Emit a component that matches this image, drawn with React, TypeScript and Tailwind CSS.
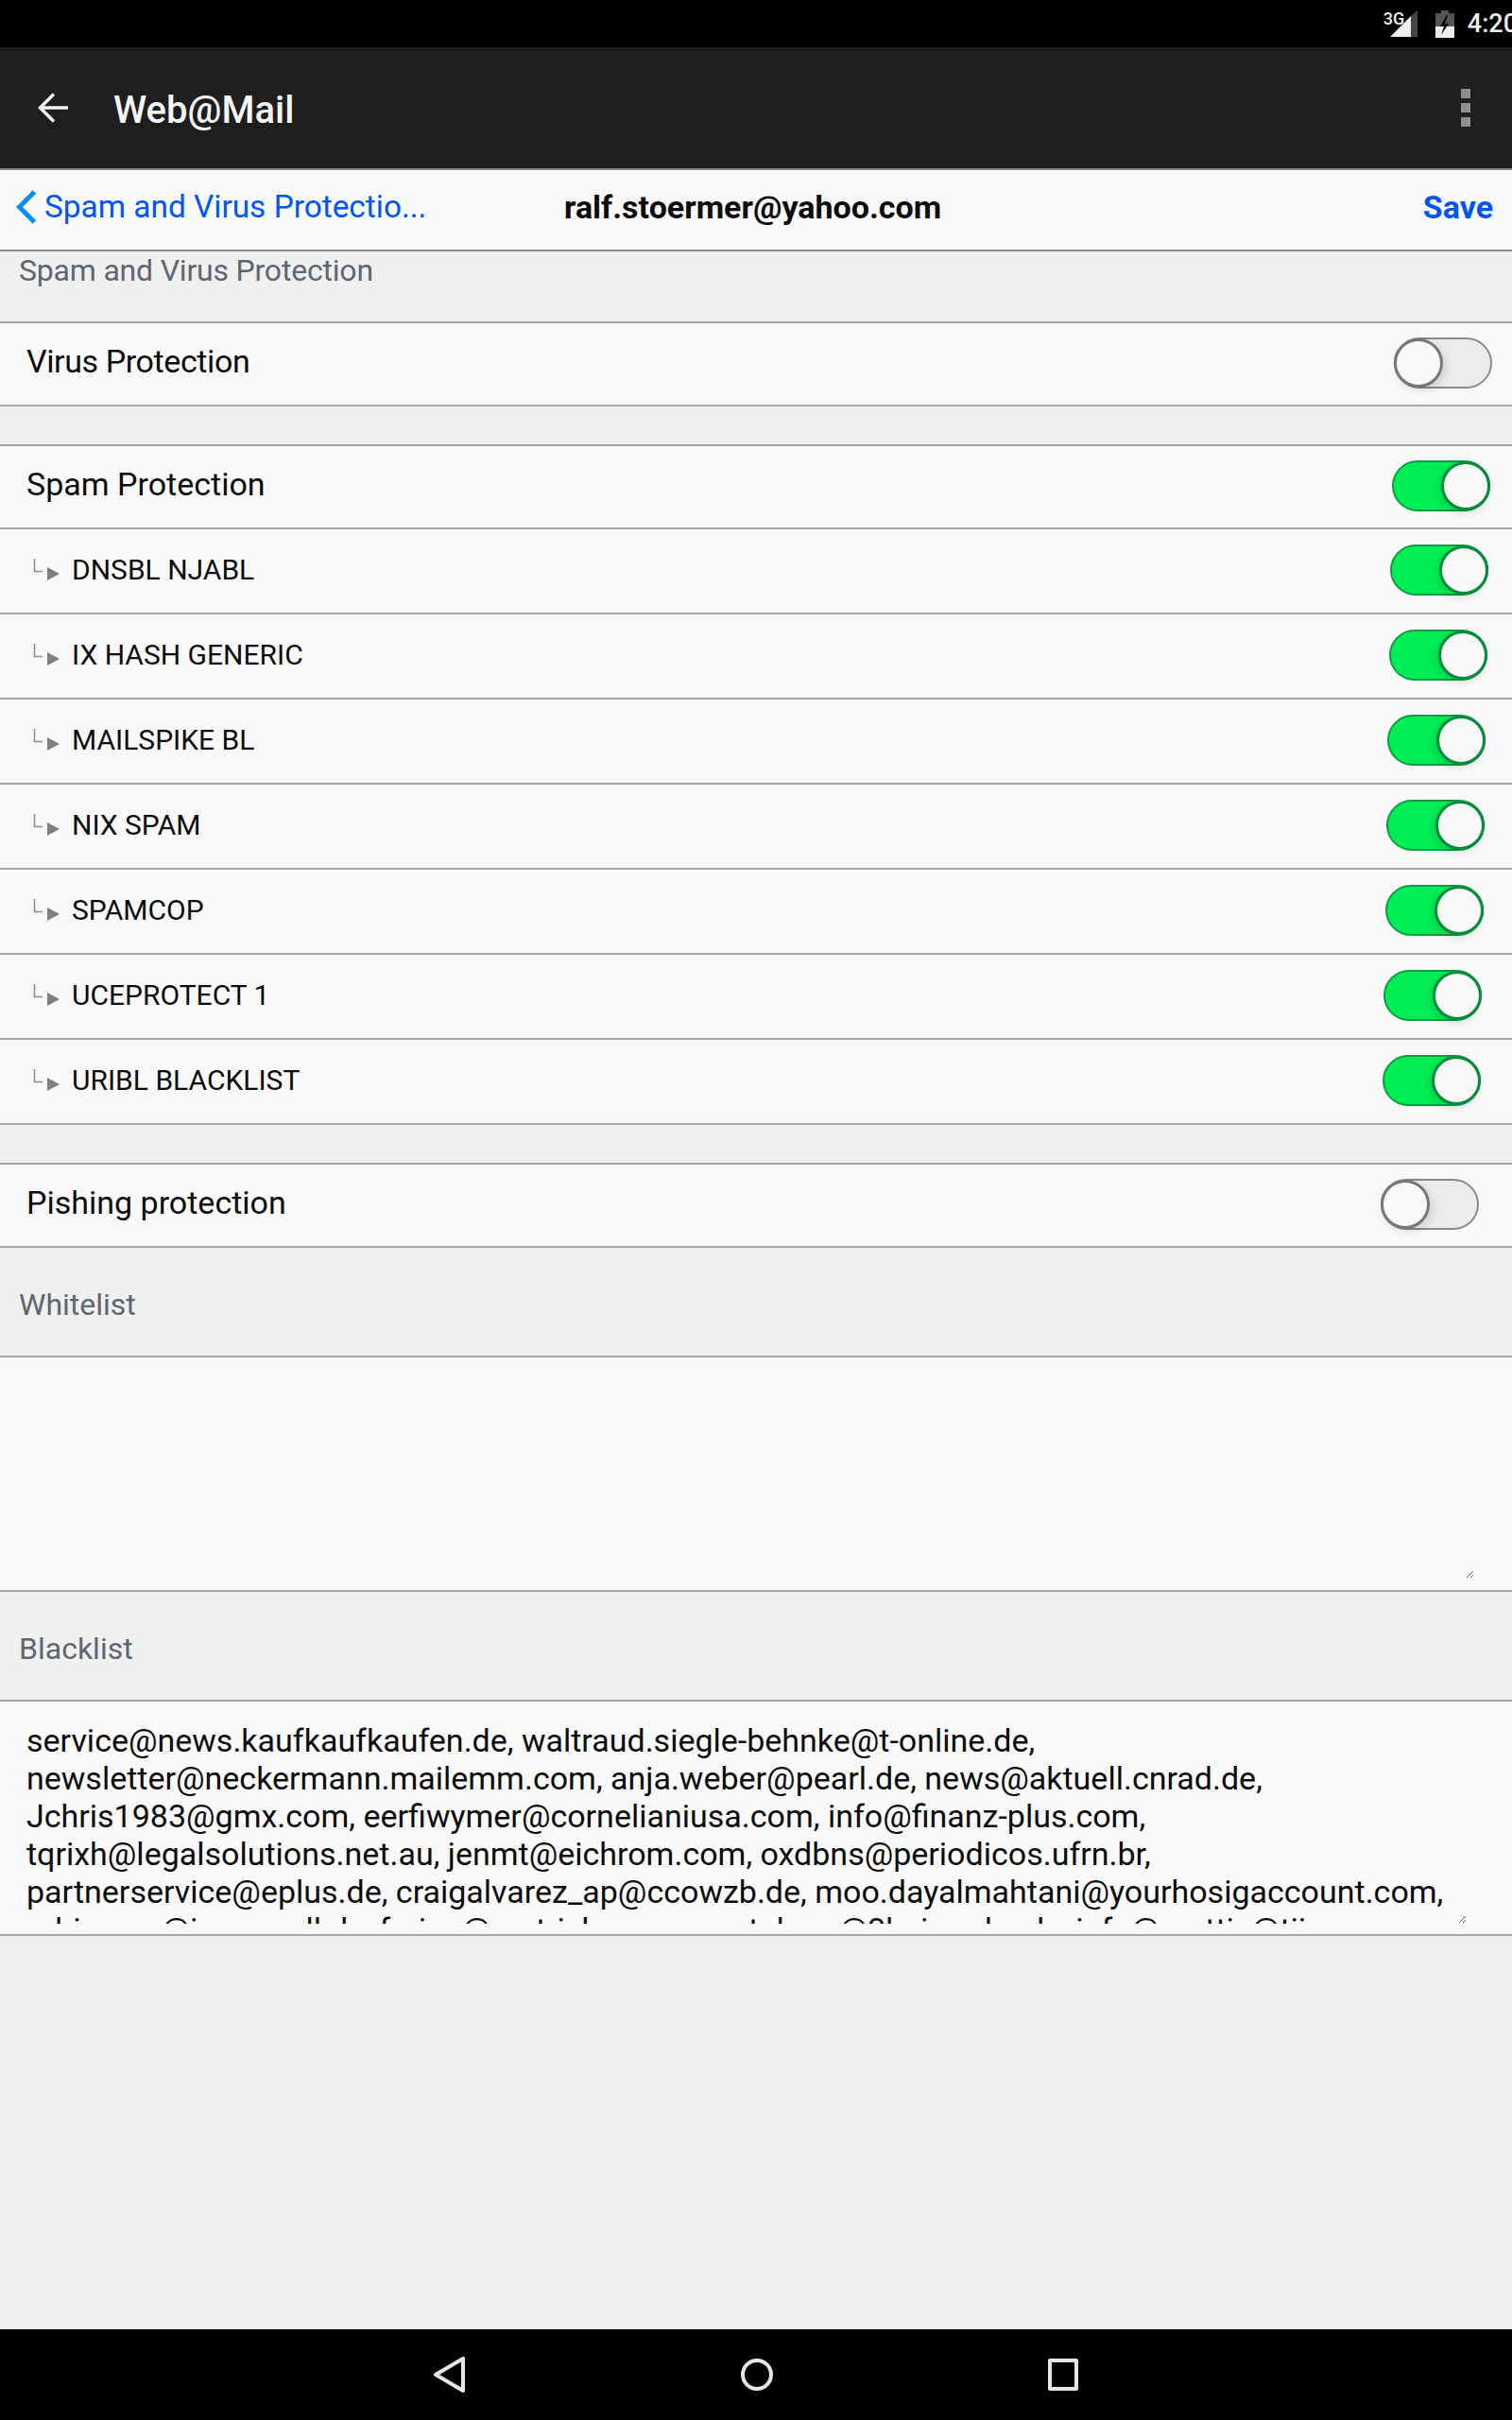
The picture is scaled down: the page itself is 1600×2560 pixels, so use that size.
import React from "react";

const font = { roboto: "font-['Roboto',sans-serif]" };

function Toggle({ on, className }: { on: boolean; className: string }) {
  return (
    <div
      className={`relative h-[54px] w-[104px] shrink-0 rounded-full border-2 ${
        on ? "border-[#04a03e] bg-[#00ee55]" : "border-[#8a8a8a] bg-[#ececec]"
      } ${className}`}
    >
      <div
        className={`absolute -top-[1px] h-[52px] w-[52px] rounded-full bg-[#f9f9f9] ${
          on
            ? "-right-[2px] border-[3px] border-[#0a8a3c] shadow-[-3px_3px_8px_rgba(0,0,0,0.12)]"
            : "-left-[2px] border-[3px] border-[#777777] shadow-[3px_3px_8px_rgba(0,0,0,0.12)]"
        }`}
      />
    </div>
  );
}

function Row({ label, on, mr, labelClass = "" }: { label: string; on: boolean; mr: string; labelClass?: string }) {
  return (
    <div className="flex h-[88px] items-center justify-between border-b-2 border-[#a5a5a5] bg-[#f9f9f9] pb-[2px] pl-[28px] text-[34px] text-[#0c0c0c]">
      <span className={`-mt-[4px] ${labelClass}`}>{label}</span>
      <Toggle on={on} className={mr} />
    </div>
  );
}

function SubRow({ label, mr }: { label: string; mr: string }) {
  return (
    <div className="flex h-[90px] items-center justify-between border-b-2 border-[#a5a5a5] bg-[#f9f9f9] pl-[34px] text-[30px] text-[#0c0c0c]">
      <span className="flex items-center">
        <svg width="32" height="26" viewBox="0 0 32 26" className="mr-[10px]">
          <path d="M2.5 0V13.5H11" fill="none" stroke="#8c8c8c" strokeWidth="1.5" />
          <path d="M16 9L29 16L16 23Z" fill="#808080" />
        </svg>
        <span className="-mt-[4px]">{label}</span>
      </span>
      <Toggle on className={`-mt-[2px] ${mr}`} />
    </div>
  );
}

function SectionLabel({ label }: { label: string }) {
  return (
    <div className="flex h-[116px] items-center border-b-2 border-[#a5a5a5] bg-[#eff1f1] pl-[20px] pt-[5px] text-[32px] text-[#62656f]">
      {label}
    </div>
  );
}

const blacklist = [
  "service@news.kaufkaufkaufen.de, waltraud.siegle-behnke@t-online.de,",
  "newsletter@neckermann.mailemm.com, anja.weber@pearl.de, news@aktuell.cnrad.de,",
  "Jchris1983@gmx.com, eerfiwymer@cornelianiusa.com, info@finanz-plus.com,",
  "tqrixh@legalsolutions.net.au, jenmt@eichrom.com, oxdbns@periodicos.ufrn.br,",
  "partnerservice@eplus.de, craigalvarez_ap@ccowzb.de, moo.dayalmahtani@yourhosigaccount.com,",
  "rubinsmn@iamsmall.de, fmjoe@metrickey.com, ustahms@3hcimarke.de, info@mattie@tiiscom.com,",
].join("\n");

const subs = [
  { label: "DNSBL NJABL", mr: "mr-[25px]" },
  { label: "IX HASH GENERIC", mr: "mr-[26px]" },
  { label: "MAILSPIKE BL", mr: "mr-[28px]" },
  { label: "NIX SPAM", mr: "mr-[29px]" },
  { label: "SPAMCOP", mr: "mr-[30px]" },
  { label: "UCEPROTECT 1", mr: "mr-[32px]" },
  { label: "URIBL BLACKLIST", mr: "mr-[33px]" },
];

export default function App() {
  return (
    <div className={`flex h-[2560px] w-[1600px] flex-col overflow-hidden bg-[#eff1f1] ${font.roboto}`}>
      {/* status bar */}
      <div className="flex h-[50px] shrink-0 items-center justify-end overflow-hidden bg-black">
        <div className="relative mr-[19px] h-[28px] w-[29px]">
          <span className="absolute -left-[7px] top-[1px] text-[18px] font-medium leading-[16px] text-[#eeeeee]">3G</span>
          <svg width="29" height="28" viewBox="0 0 29 28" className="block">
            <path d="M29 0V28H22V6Z" fill="#444444" />
            <path d="M0 28L22 6V28Z" fill="#eeeeee" />
          </svg>
        </div>
        <svg width="20" height="29" viewBox="0 0 20 29" className="mr-[14px] block">
          <path d="M0 3H6V0H14V3H20V17H0Z" fill="#555555" />
          <path d="M0 17H20V29H0Z" fill="#eeeeee" />
          <path d="M12 5L5 17L9 17L6 26L14 14L10 14L13 5Z" fill="#000000" />
        </svg>
        <span className="-mr-[6px] text-[27px] font-medium leading-none text-[#eeeeee]">4:20</span>
      </div>

      {/* app bar */}
      <div className="flex h-[130px] shrink-0 items-center border-b-2 border-[#8a8a8a] bg-[#1e1e1e] pl-[40px] pr-[44px]">
        <svg width="32" height="32" viewBox="0 0 32 32" className="mr-[48px] -mt-[1px]" fill="none" stroke="#f5f5f5" strokeWidth="3.5">
          <path d="M32 16H3" />
          <path d="M17 1.5L2.5 16L17 30.5" />
        </svg>
        <span className="mt-[5px] flex-1 text-[40px] font-medium leading-none text-[#f5f5f5]">Web@Mail</span>
        <div className="flex flex-col gap-[5px]">
          <div className="h-[10px] w-[10px] bg-[#8f8f8f]" />
          <div className="h-[10px] w-[10px] bg-[#8f8f8f]" />
          <div className="h-[10px] w-[10px] bg-[#8f8f8f]" />
        </div>
      </div>

      {/* nav */}
      <div className="relative flex h-[86px] shrink-0 items-center justify-between border-b-2 border-[#8a8a8a] bg-[#f9f9f9] pb-[5px] pl-[17px] pr-[20px]">
        <span className="flex items-center">
          <svg width="22" height="36" viewBox="0 0 22 36" fill="none" stroke="#0a8cf5" strokeWidth="5" className="mr-[8px]">
            <path d="M19.5 2L3.5 18L19.5 34" />
          </svg>
          <span className="text-[33.4px] text-[#0055f5]">Spam and Virus Protectio...</span>
        </span>
        <span className="absolute left-[597px] text-[34px] font-bold text-[#0c0c0c]">ralf.stoermer@yahoo.com</span>
        <span className="text-[34px] font-bold text-[#0055f5]">Save</span>
      </div>

      {/* top section */}
      <div className="h-[76px] shrink-0 border-b-2 border-[#a5a5a5] bg-[#eff1f1] pl-[20px] pt-[2px] text-[32px] leading-[36px] tracking-[-0.2px] text-[#62656f]">
        Spam and Virus Protection
      </div>

      <Row label="Virus Protection" on={false} mr="mr-[21px]" labelClass="tracking-[-0.4px]" />
      <div className="h-[42px] shrink-0 border-b-2 border-[#a5a5a5] bg-[#eff1f1]" />
      <Row label="Spam Protection" on mr="mr-[23px]" />
      {subs.map((s) => (
        <SubRow key={s.label} label={s.label} mr={s.mr} />
      ))}
      <div className="h-[42px] shrink-0 border-b-2 border-[#a5a5a5] bg-[#eff1f1]" />
      <Row label="Pishing protection" on={false} mr="mr-[35px]" />

      <SectionLabel label="Whitelist" />
      <div className="h-[248px] shrink-0 border-b-2 border-[#a5a5a5] bg-[#f9f9f9]">
        <textarea
          readOnly
          value=""
          className="block h-[234px] w-[1560px] resize bg-[#f9f9f9] outline-none"
        />
      </div>
      <SectionLabel label="Blacklist" />
      <div className="h-[248px] shrink-0 border-b-2 border-[#a5a5a5] bg-[#f9f9f9]">
        <textarea
          readOnly
          value={blacklist}
          wrap="off"
          className="block h-[235px] w-[1552px] resize overflow-hidden whitespace-pre bg-[#f9f9f9] pl-[28px] pt-[21px] text-[34px] leading-[40px] text-[#0c0c0c] outline-none"
        />
      </div>

      <div className="flex-1" />

      {/* nav bar */}
      <div className="flex h-[96px] shrink-0 items-center justify-center gap-[291px] bg-black">
        <svg width="34" height="38" viewBox="0 0 34 38" fill="none" stroke="#e6e6e6" strokeWidth="4" strokeLinejoin="round">
          <path d="M31 2V36L2 19Z" />
        </svg>
        <svg width="34" height="36" viewBox="0 0 34 36" fill="none" stroke="#e6e6e6" strokeWidth="4">
          <circle cx="17" cy="18" r="15" />
        </svg>
        <svg width="32" height="34" viewBox="0 0 32 34" fill="none" stroke="#e6e6e6" strokeWidth="4" strokeLinejoin="round">
          <rect x="2" y="2" width="28" height="30" />
        </svg>
      </div>
    </div>
  );
}
